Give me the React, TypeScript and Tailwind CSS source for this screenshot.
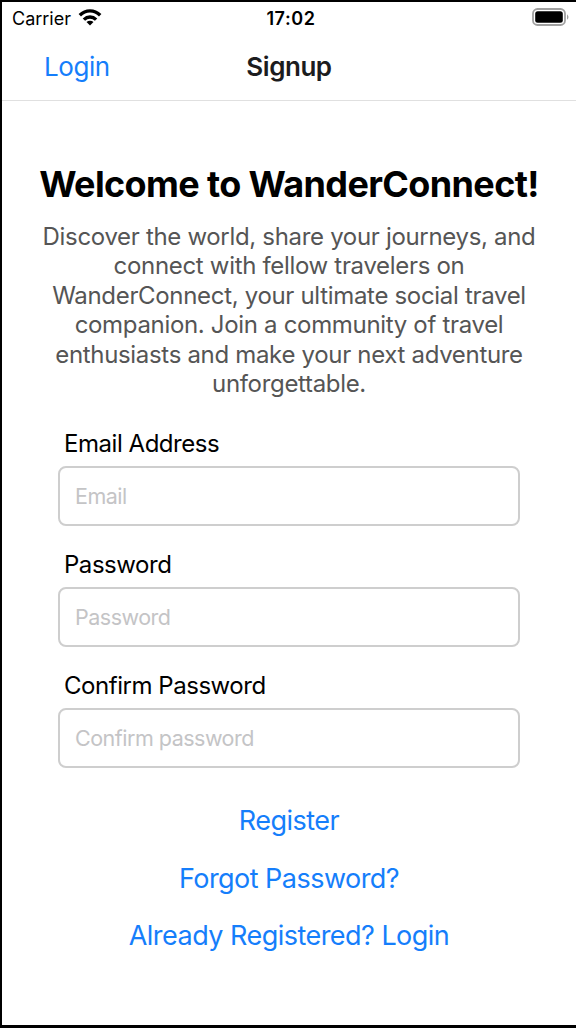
const intro = [
  "Discover the world, share your journeys, and",
  "connect with fellow travelers on",
  "WanderConnect, your ultimate social travel",
  "companion. Join a community of travel",
  "enthusiasts and make your next adventure",
  "unforgettable.",
];

function Field({ label, placeholder, type }: { label: string; placeholder: string; type: string }) {
  return (
    <label className="block h-[120.9px]">
      <span className="block h-[39px] pl-[6px] text-[24px] leading-[34px] tracking-[-0.46px] text-black">{label}</span>
      <input
        type={type}
        placeholder={placeholder}
        className="block h-[60px] w-full rounded-[8px] border-2 border-[#cecece] bg-white px-[15px] text-[21.5px] tracking-[-0.5px] outline-none placeholder:text-[#c4c4c6]"
      />
    </label>
  );
}

export default function App() {
  return (
    <div className="flex h-[1028px] w-[576px] flex-col overflow-hidden border-b-[3px] border-l-2 border-t-2 border-black bg-white font-['Inter',sans-serif] text-black">
      <div className="grid h-[32px] grid-cols-3 items-center pl-[10px] pr-[6px] text-[18px]">
        <div className="flex items-center gap-[7px]">
          <span>Carrier</span>
          <svg className="mb-[2px]" width="24" height="17" viewBox="0 0 24 17" fill="none" stroke="black" strokeWidth="3.4">
            <path d="M1.8 6.3C7.7.4 16.3.4 22.2 6.3M5.9 10.6c3.5-3.4 8.7-3.4 12.2 0" />
            <path d="M12 16.5 8.5 13c2-1.8 5-1.8 7 0Z" fill="black" stroke="none" />
          </svg>
        </div>
        <span className="text-center font-semibold tracking-[0.6px]">17:02</span>
        <svg className="mb-[2px] justify-self-end" width="38" height="18" viewBox="0 0 38 18">
          <rect x="1" y="1" width="32" height="16" rx="4.5" fill="none" stroke="#a0a0a0" strokeWidth="1.8" />
          <rect x="3.2" y="3.2" width="27.6" height="11.6" rx="2.5" />
          <path d="M35 6.2q3 2.8 0 5.6Z" fill="#a0a0a0" />
        </svg>
      </div>
      <header className="grid h-[67px] grid-cols-3 items-center border-b border-[#e0e0e0] pb-[2px] text-[26px] tracking-[-0.45px]">
        <a className="pl-[42px] text-[#157efb]">Login</a>
        <h1 className="text-center font-semibold text-[#1c1c1e]">Signup</h1>
      </header>
      <main className="flex flex-col items-center pt-[59px]">
        <h2 className="h-[62px] whitespace-nowrap text-[36px] font-bold leading-[48px] tracking-[-0.62px]">Welcome to WanderConnect!</h2>
        <p className="text-center text-[24px] leading-[29.4px] tracking-[-0.32px] text-[#555]">
          {intro.map((line) => <span key={line} className="block whitespace-nowrap">{line}</span>)}
        </p>
        <form className="w-[462px] pt-[28.4px]">
          <Field label="Email Address" placeholder="Email" type="email" />
          <Field label="Password" placeholder="Password" type="password" />
          <Field label="Confirm Password" placeholder="Confirm password" type="password" />
        </form>
        <nav className="flex flex-col items-center pt-[2.6px] text-[27px] leading-[57.5px] tracking-[-0.53px] text-[#157efb]">
          <a>Register</a><a>Forgot Password?</a><a>Already Registered? Login</a>
        </nav>
      </main>
    </div>
  );
}
